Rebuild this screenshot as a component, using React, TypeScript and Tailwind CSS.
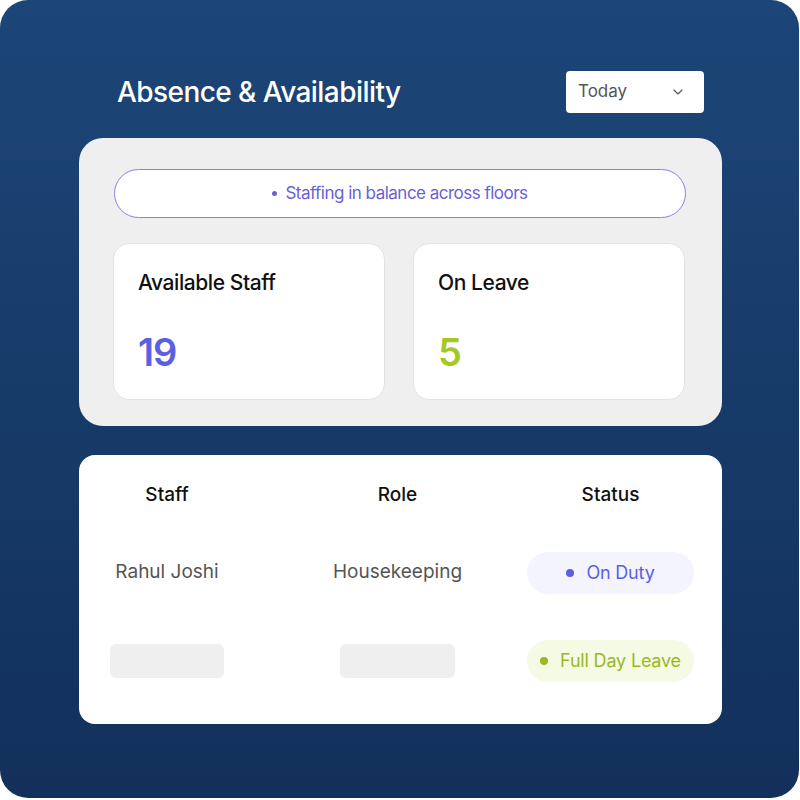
// Absence & Availability card — staffing summary + status table.
import { ChevronDown } from "lucide-react";

const font = { fontFamily: "Inter, 'Noto Sans', sans-serif" };

function StatCard({ label, value, tone }: { label: string; value: string; tone: string }) {
  return (
    <div className="flex h-[157px] w-[272px] flex-col rounded-[16px] border border-[#e2e2e2] bg-white pl-[24px] pt-[25px]">
      <span className="text-[21px] font-medium leading-[28px] tracking-[-0.02em] text-[#111]">{label}</span>
      <span className={`mt-[32px] text-[38px] font-semibold leading-[46px] tracking-[-0.03em] ${tone}`}>{value}</span>
    </div>
  );
}

function StatusPill({ label, dot, text, bg }: { label: string; dot: string; text: string; bg: string }) {
  return (
    <div className={`flex h-[42px] w-[167px] items-center justify-center gap-[12px] rounded-full ${bg}`}>
      <span className={`size-[8px] rounded-full ${dot}`} />
      <span className={`text-[18px] leading-none tracking-[-0.01em] ${text}`}>{label}</span>
    </div>
  );
}

const cols = "grid grid-cols-[114px_116px_115px_72px_167px] items-center";

function Cell({ children }: { children: React.ReactNode }) {
  return <span className="flex justify-center whitespace-nowrap text-[19px] text-[#555]">{children}</span>;
}

export default function App() {
  return (
    <div className="h-[800px] w-[800px] bg-white" style={font}>
      <div className="flex h-[798px] w-[799px] flex-col rounded-[28px] bg-gradient-to-b from-[#1c4678] to-[#12305a] pl-[79px] pr-[77px] pt-[71px]">
        <header className="ml-[38px] mr-[18px] flex items-center justify-between">
          <h1 className="text-[28px] font-medium tracking-[-0.02em] text-white">Absence &amp; Availability</h1>
          <button className="flex h-[42px] w-[138px] items-center justify-between rounded-[4px] bg-white pl-[12px] pr-[18px] text-[17px] text-[#555]">
            Today
            <ChevronDown size={16} strokeWidth={1.75} className="text-[#555]" />
          </button>
        </header>

        <section className="mt-[25px] rounded-[24px] bg-[#efefef] pb-[26px] pl-[34px] pr-[36px] pt-[31px]">
          <div className="ml-px flex h-[49px] items-center justify-center gap-[8px] rounded-full border border-[#8a7fe0] bg-white text-[17px] tracking-[-0.03em] text-[#6a5fd4]">
            <span className="size-[5px] rounded-full bg-[#6a5fd4]" />
            Staffing in balance across floors
          </div>
          <div className="mt-[25px] flex gap-[28px]">
            <StatCard label="Available Staff" value="19" tone="text-[#5b5fe3]" />
            <StatCard label="On Leave" value="5" tone="text-[#a5c823]" />
          </div>
        </section>

        <section className="mt-[29px] rounded-[16px] bg-white pb-[42px] pl-[31px] pt-[26px]">
          <div className={cols}>
            <span className="text-center text-[19px] font-medium text-[#111]">Staff</span>
            <span />
            <span className="text-center text-[19px] font-medium text-[#111]">Role</span>
            <span />
            <span className="text-center text-[19px] font-medium text-[#111]">Status</span>
          </div>
          <div className={`mt-[42px] ${cols}`}>
            <Cell>Rahul Joshi</Cell>
            <span />
            <Cell>Housekeeping</Cell>
            <span />
            <StatusPill label="On Duty" dot="bg-[#5b5fe3]" text="text-[#5b5fe3]" bg="bg-[#f3f4fe]" />
          </div>
          <div className={`mt-[46px] ${cols}`}>
            <span className="h-[34px] rounded-[6px] bg-[#efefef]" />
            <span />
            <span className="h-[34px] rounded-[6px] bg-[#efefef]" />
            <span />
            <StatusPill label="Full Day Leave" dot="bg-[#9bb823]" text="text-[#9bb823]" bg="bg-[#f5fae4]" />
          </div>
        </section>
      </div>
    </div>
  );
}
